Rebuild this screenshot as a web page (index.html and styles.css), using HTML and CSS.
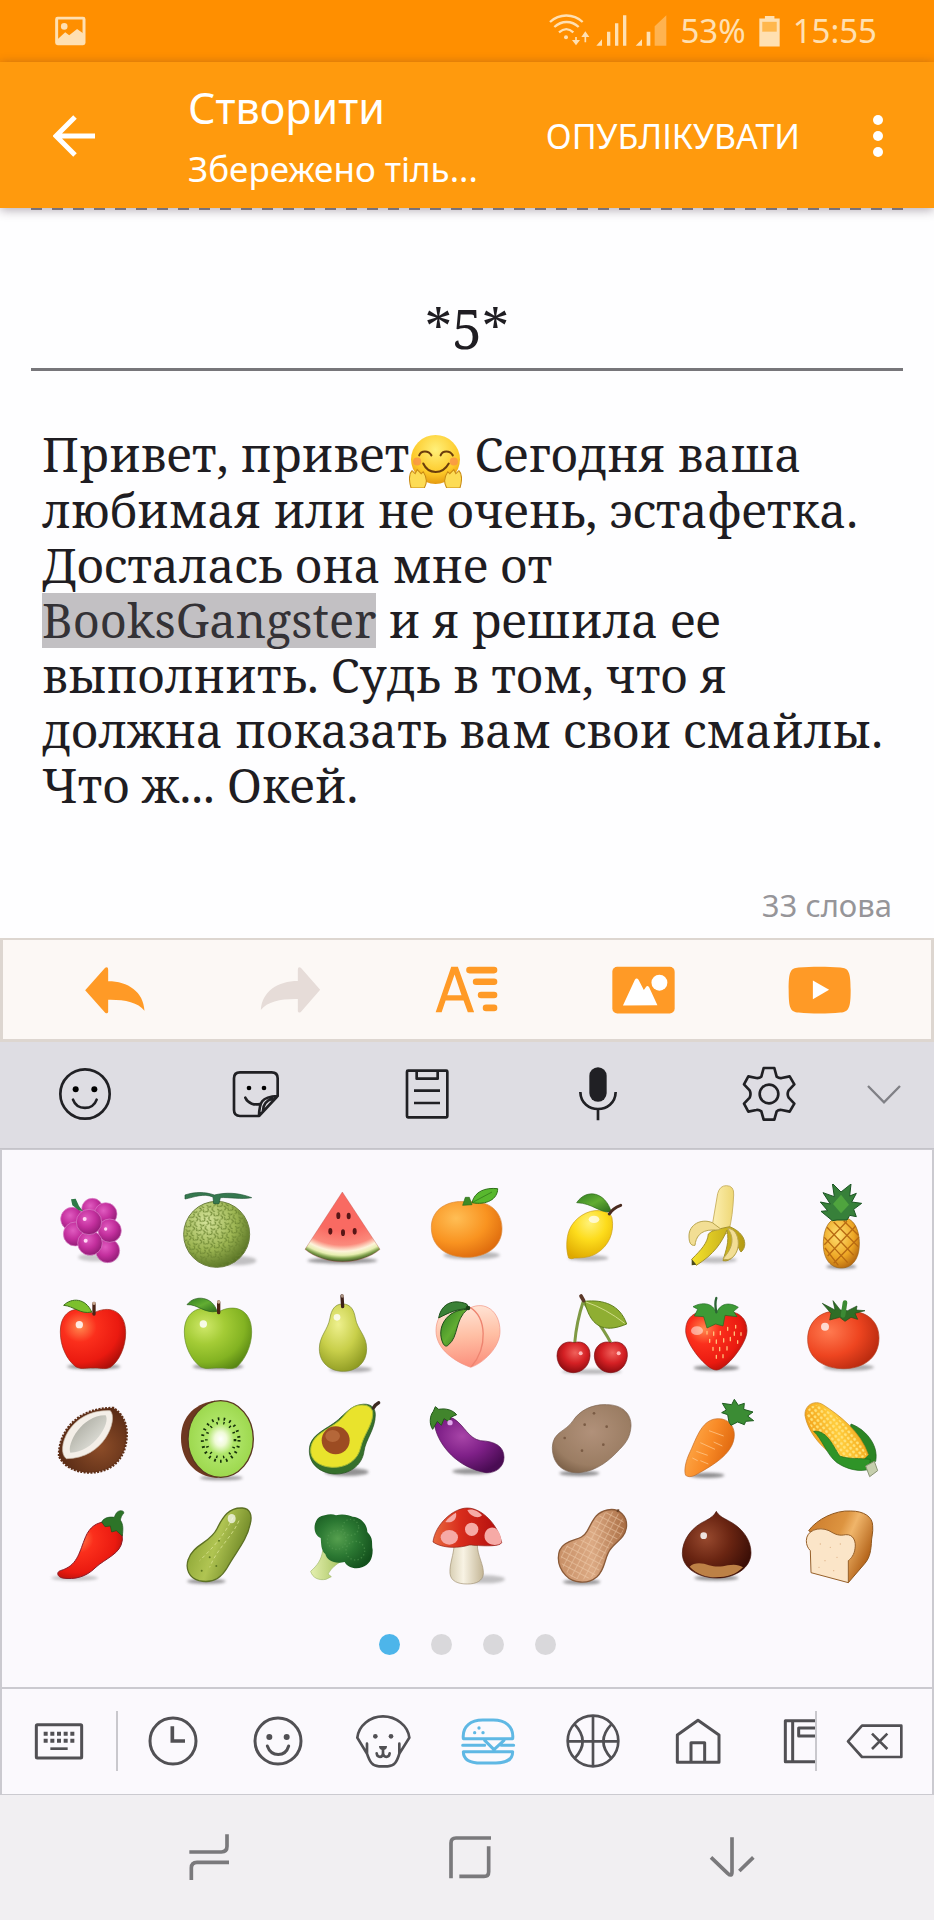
FILE: index.html
```html
<!DOCTYPE html>
<html lang="uk">
<head>
    <meta charset="UTF-8">
    <meta name="viewport" content="width=device-width, initial-scale=1.0">
    <title>Створити</title>
    <link rel="stylesheet" href="styles.css">
</head>
<body>
    <!-- shared gradients for the emoji drawings -->
    <svg class="defs" width="0" height="0" aria-hidden="true">
        <defs>
            <filter id="soft" x="-30%" y="-80%" width="160%" height="260%"><feGaussianBlur stdDeviation="5"/></filter>
            <radialGradient id="gGrape" cx=".4" cy=".35" r=".7"><stop offset="0" stop-color="#e05cc0"/><stop offset=".5" stop-color="#c4309e"/><stop offset="1" stop-color="#8d1a72"/></radialGradient>
            <radialGradient id="gMelon" cx=".35" cy=".3" r=".8"><stop offset="0" stop-color="#d5e39a"/><stop offset=".55" stop-color="#9cb552"/><stop offset="1" stop-color="#48631a"/></radialGradient>
            <pattern id="pMelon" width="34" height="30" patternUnits="userSpaceOnUse" patternTransform="rotate(20)"><path d="M2 4q8 6 12-2M20 3v8l9 3M6 12q7 2 4 9l-8 4M17 18l8 4-3 7M30 20l3 6" fill="none" stroke="#6a8430" stroke-width="3" stroke-linecap="round"/></pattern>
            <radialGradient id="gWater" gradientUnits="userSpaceOnUse" cx="937" cy="70" r="235"><stop offset=".6" stop-color="#f96a62"/><stop offset=".78" stop-color="#fb8a7c"/><stop offset=".86" stop-color="#fdf3da"/><stop offset=".91" stop-color="#e6eeb0"/><stop offset=".95" stop-color="#7fa04c"/><stop offset="1" stop-color="#33431d"/></radialGradient>
            <radialGradient id="gOrange" cx=".35" cy=".3" r=".8"><stop offset="0" stop-color="#ffbe55"/><stop offset=".55" stop-color="#f99320"/><stop offset="1" stop-color="#d9640a"/></radialGradient>
            <radialGradient id="gLemon" cx=".5" cy=".25" r=".8"><stop offset="0" stop-color="#fff27a"/><stop offset=".45" stop-color="#fddc1c"/><stop offset="1" stop-color="#dea800"/></radialGradient>
            <linearGradient id="gBanana"><stop offset="0" stop-color="#fdf0b4"/><stop offset="1" stop-color="#eed775"/></linearGradient>
            <linearGradient id="gPeel"><stop offset="0" stop-color="#f4e22d"/><stop offset="1" stop-color="#b49a14"/></linearGradient>
            <radialGradient id="gPine" cx=".4" cy=".35" r=".75"><stop offset="0" stop-color="#ffe070"/><stop offset=".6" stop-color="#eda624"/><stop offset="1" stop-color="#a85a0c"/></radialGradient>
            <radialGradient id="gRed" cx=".3" cy=".3" r=".85"><stop offset="0" stop-color="#ff8a50"/><stop offset=".3" stop-color="#fb2f1c"/><stop offset=".7" stop-color="#ea1a10"/><stop offset="1" stop-color="#9c0c06"/></radialGradient>
            <radialGradient id="gGreen" cx=".3" cy=".3" r=".85"><stop offset="0" stop-color="#cfe86a"/><stop offset=".35" stop-color="#a4cc36"/><stop offset=".7" stop-color="#83b322"/><stop offset="1" stop-color="#4e7c10"/></radialGradient>
            <radialGradient id="gPear" cx=".4" cy=".3" r=".8"><stop offset="0" stop-color="#eef08e"/><stop offset=".5" stop-color="#c8cf4a"/><stop offset="1" stop-color="#85921c"/></radialGradient>
            <linearGradient id="gLeaf" x1="0" y1="0" x2="1" y2="1"><stop offset="0" stop-color="#2f7d22"/><stop offset=".5" stop-color="#62ad32"/><stop offset="1" stop-color="#2b6a1c"/></linearGradient>
            <linearGradient id="gPeach" x1=".4" y1="0" x2=".5" y2="1"><stop offset="0" stop-color="#ffe6d8"/><stop offset=".5" stop-color="#ffbfa4"/><stop offset="1" stop-color="#fb8f7c"/></linearGradient>
            <radialGradient id="gCherry" cx=".55" cy=".35" r=".7"><stop offset="0" stop-color="#f0605a"/><stop offset=".5" stop-color="#d42024"/><stop offset="1" stop-color="#84090d"/></radialGradient>
            <radialGradient id="gTomato" cx=".3" cy=".35" r=".85"><stop offset="0" stop-color="#ff7a50"/><stop offset=".5" stop-color="#ee4520"/><stop offset="1" stop-color="#a8220a"/></radialGradient>
            <linearGradient id="gCoco" x1="0" y1="0" x2="1" y2="1"><stop offset="0" stop-color="#9d9d92"/><stop offset="1" stop-color="#f2f2ec"/></linearGradient>
            <radialGradient id="gShell" cx=".6" cy=".6" r=".6"><stop offset="0" stop-color="#8d4d28"/><stop offset="1" stop-color="#5a2c16"/></radialGradient>
            <radialGradient id="gKiwi"><stop offset="0" stop-color="#fff"/><stop offset=".18" stop-color="#f0fbd8"/><stop offset=".4" stop-color="#b0e66a"/><stop offset="1" stop-color="#9dd84e"/></radialGradient>
            <radialGradient id="gEgg" cx=".4" cy=".35" r=".7"><stop offset="0" stop-color="#a845a8"/><stop offset=".5" stop-color="#7f2088"/><stop offset="1" stop-color="#4a0c54"/></radialGradient>
            <radialGradient id="gPotato" cx=".5" cy=".4" r=".7"><stop offset="0" stop-color="#b1917a"/><stop offset=".7" stop-color="#9b7d63"/><stop offset="1" stop-color="#755a42"/></radialGradient>
            <linearGradient id="gCarrot" x1="0" y1=".3" x2="1" y2=".7"><stop offset="0" stop-color="#ffad4e"/><stop offset=".5" stop-color="#f88a26"/><stop offset="1" stop-color="#d9600a"/></linearGradient>
            <linearGradient id="gCorn" x1="0" y1=".6" x2="1" y2=".3"><stop offset="0" stop-color="#f09a14"/><stop offset=".5" stop-color="#ffcc3c"/><stop offset="1" stop-color="#f0a014"/></linearGradient>
            <pattern id="pCorn" width="13" height="14" patternUnits="userSpaceOnUse" patternTransform="rotate(-38)"><ellipse cx="6" cy="7" rx="4" ry="5" fill="#ffe27a"/></pattern>
            <linearGradient id="gPickle" x1="0" y1=".3" x2="1" y2=".7"><stop offset="0" stop-color="#86a030"/><stop offset=".45" stop-color="#b0c452"/><stop offset="1" stop-color="#5c761a"/></linearGradient>
            <radialGradient id="gBroc" cx=".4" cy=".45" r=".65"><stop offset="0" stop-color="#559f4e"/><stop offset=".5" stop-color="#2b7832"/><stop offset="1" stop-color="#13501c"/></radialGradient>
            <linearGradient id="gStalk"><stop offset="0" stop-color="#e4efb0"/><stop offset="1" stop-color="#a5c25c"/></linearGradient>
            <linearGradient id="gStem"><stop offset="0" stop-color="#d8cfb4"/><stop offset=".4" stop-color="#f8f3e4"/><stop offset="1" stop-color="#c4b696"/></linearGradient>
            <linearGradient id="gCap"><stop offset="0" stop-color="#e8693e"/><stop offset=".4" stop-color="#d82c1c"/><stop offset="1" stop-color="#b00c0c"/></linearGradient>
            <linearGradient id="gNut"><stop offset="0" stop-color="#c78f66"/><stop offset=".5" stop-color="#dcaa84"/><stop offset="1" stop-color="#a86c42"/></linearGradient>
            <pattern id="pNut" width="18" height="18" patternUnits="userSpaceOnUse" patternTransform="rotate(28)"><path d="M0 0H18M0 0V18" stroke="#f3d3b4" stroke-width="4"/></pattern>
            <radialGradient id="gChest" cx=".35" cy=".4" r=".7"><stop offset="0" stop-color="#97492e"/><stop offset=".5" stop-color="#6a2512"/><stop offset="1" stop-color="#3a0e06"/></radialGradient>
            <linearGradient id="gBread" x1="0" y1="0" x2="1" y2=".5"><stop offset="0" stop-color="#c9792a"/><stop offset=".5" stop-color="#dd9440"/><stop offset=".65" stop-color="#f0b56a"/><stop offset="1" stop-color="#b4641a"/></linearGradient>
            <radialGradient id="gFace" cx=".5" cy=".3" r=".7"><stop offset="0" stop-color="#fff07a"/><stop offset=".7" stop-color="#fdc928"/><stop offset="1" stop-color="#e59a10"/></radialGradient>
        </defs>
    </svg>

    <div class="screen">
        <div class="status-bar">
            <svg class="status-picture" viewBox="164 48 94 88" aria-hidden="true">
                <rect x="169" y="53" width="83" height="78" rx="3" fill="none" stroke="#ffe0b2" stroke-width="9"/>
                <circle cx="192" cy="78" r="10" fill="#ffe0b2"/>
                <path d="M171 118l24-22 12 9 24-19 20 14v32h-80z" fill="#ffe0b2"/>
            </svg>
            <div class="status-right">
                <svg class="status-signal" viewBox="240 40 354 108" aria-hidden="true">
                    <g fill="none" stroke="#ffe0b2" stroke-width="7">
                        <path d="M243 67c28-26 70-26 98 0M256 82c22-20 52-20 73 0M270 98c14-12 30-12 43 0"/>
                        <path d="M321 112v20M349 128v-26" stroke-width="5"/>
                    </g>
                    <g fill="#ffe0b2">
                        <circle cx="291" cy="113" r="6"/>
                        <path d="M309 121h24l-12 16zM337 112h24l-12-17z"/>
                        <path d="M382 138l17-19v19zM414 96h10v42h-10zM438 71h10v67h-10zM462 47h10v91h-10z"/>
                        <path d="M500 138l19-19v19zM533 96h11v42h-11z"/>
                        <path d="M557 138V80l35-33v91z" opacity=".45"/>
                    </g>
                </svg>
                <span>53%</span>
                <svg class="status-battery" viewBox="874 46 64 96" aria-hidden="true">
                    <path d="M892 48h29v8h16v85h-62V56h17z" fill="#ffe0b2"/>
                    <path d="M884 66h44v30h-44z" fill="#ffb74d"/>
                </svg>
                <span>15:55</span>
            </div>
        </div>

        <header class="app-bar">
            <button class="icon-button back" aria-label="Назад">
                <svg viewBox="0 0 44 44"><path d="M42 22H4M22 3L3 22l19 19" fill="none" stroke="#fff" stroke-width="5"/></svg>
            </button>
            <div class="app-title">
                <h1>Створити</h1>
                <p>Збережено тіль...</p>
            </div>
            <button class="publish">ОПУБЛІКУВАТИ</button>
            <button class="icon-button more" aria-label="Меню">
                <svg viewBox="0 0 12 44"><g fill="#fff"><circle cx="6" cy="6" r="5"/><circle cx="6" cy="22" r="5"/><circle cx="6" cy="38" r="5"/></g></svg>
            </button>
        </header>

        <main class="editor">
            <div class="cover-edge"></div>
            <input class="chapter-title" type="text" value="*5*" aria-label="Назва розділу">
            <div class="story" contenteditable="true" spellcheck="false" role="textbox" aria-label="Текст">
                Привет, привет<svg class="hug" viewBox="0 0 52 52" aria-hidden="true">
                    <circle cx="26" cy="24" r="24" fill="url(#gFace)"/>
                    <g fill="none" stroke="#6b3d0c" stroke-width="2" stroke-linecap="round"><path d="M10 20c2-5 9-5 12 0M31 20c2-5 9-5 12 0M14 28c5 11 19 11 25 0"/></g>
                    <circle cx="8" cy="26" r="4" fill="#f88a4a" opacity=".7"/><circle cx="44" cy="26" r="4" fill="#f88a4a" opacity=".7"/>
                    <path d="M2 52C0 45 0 38 3 35l3 3 2-4 4 4 2-2c4 6 4 11 1 16zM50 52c2-7 2-14-1-17l-3 3-2-4-4 4-2-2c-4 6-4 11-1 16z" fill="#fddc55" stroke="#c98a14" stroke-width="1"/>
                </svg> Сегодня ваша<br>
                любимая или не очень, эстафетка.<br>
                Досталась она мне от<br>
                <span class="selected">BooksGangster</span> и я решила ее<br>
                выполнить. Судь в том, что я<br>
                должна показать вам свои смайлы.<br>
                Что ж... Окей.
            </div>
            <p class="word-count">33 слова</p>
        </main>

        <div class="format-bar">
            <button class="icon-button" aria-label="Скасувати">
                <svg viewBox="252 115 180 180"><path d="M254 206l60-68q9-4 9 6v35c60 0 106 32 109 88-20-26-62-34-109-33v37q-2 6-9 2z" fill="#ff9a26"/></svg>
            </button>
            <button class="icon-button" aria-label="Повторити" disabled>
                <svg viewBox="782 115 180 180"><path d="M961 204l-58-66q-9-4-9 6v34c-60 0-108 32-111 87 20-26 62-34 111-33v37q2 6 9 2z" fill="#e6dcd8"/></svg>
            </button>
            <button class="icon-button" aria-label="Формат тексту">
                <svg viewBox="-94 235 190 180">
                    <path d="M-92 392l47-137h20l49 137H5l-13-35h-54l-12 35zM-57 341h43l-21-63z" fill="#ff9a26" fill-rule="evenodd"/>
                    <g stroke="#ff9a26" stroke-width="20" stroke-linecap="round"><path d="M10 265h74M30 300h54M45 340h39M60 379h24"/></g>
                </svg>
            </button>
            <button class="icon-button" aria-label="Зображення">
                <svg viewBox="435 235 190 180">
                    <rect x="436" y="255" width="188" height="141" rx="15" fill="#ff9a26"/>
                    <path d="M468 372l36-78q5-8 11 0l16 31 7-10q4-5 9 2l25 54z" fill="#fff" />
                    <circle cx="578" cy="303" r="24" fill="#fff"/>
                </svg>
            </button>
            <button class="icon-button" aria-label="Відео">
                <svg viewBox="964 235 190 180">
                    <path d="M966 325c0-55 5-66 30-68 40-3 86-3 126 0 25 2 31 13 31 68s-6 66-31 68c-40 4-86 4-126 0-25-2-30-13-30-68z" fill="#ff9a26"/>
                    <path d="M1039 296l49 28-49 29z" fill="#fff"/>
                </svg>
            </button>
        </div>

        <section class="keyboard" aria-label="Клавіатура">
            <div class="keyboard-tools">
                <button class="icon-button" aria-label="Емодзі">
                    <svg viewBox="167 430 180 180"><g fill="none" stroke="#202024" stroke-width="8" stroke-linecap="round"><circle cx="257" cy="520" r="74"/><path d="M221 537c12 33 60 33 71 0"/></g><circle cx="229" cy="506" r="9"/><circle cx="285" cy="506" r="9"/></svg>
                </button>
                <button class="icon-button" aria-label="Наліпки">
                    <svg viewBox="681 430 180 180"><g fill="none" stroke="#202024" stroke-width="8" stroke-linecap="round" stroke-linejoin="round"><path d="M780 586h-57q-18 0-18-18v-95q0-18 18-18h95q18 0 18 18v53zM780 586c1-40 6-58 56-60M739 531c8 18 28 24 46 18M792 570c0-16 8-30 28-36"/></g><circle cx="750" cy="502" r="7"/><circle cx="795" cy="502" r="7"/></svg>
                </button>
                <button class="icon-button" aria-label="Буфер обміну">
                    <svg viewBox="1194 430 180 180"><g fill="none" stroke="#202024" stroke-width="8" stroke-linejoin="round"><rect x="1224" y="450" width="121" height="140" rx="3"/><path d="M1253 452v22h63v-22M1245 510h78M1245 547h78"/></g></svg>
                </button>
                <button class="icon-button" aria-label="Голосовий ввід">
                    <svg viewBox="307 550 180 180"><rect x="371" y="560" width="52" height="103" rx="26" fill="#202024"/><path d="M344 634c2 68 104 68 106 0M397 685v34" fill="none" stroke="#202024" stroke-width="8"/></svg>
                </button>
                <button class="icon-button" aria-label="Налаштування">
                    <svg viewBox="821 550 180 180"><g fill="none" stroke="#202024" stroke-width="8" stroke-linejoin="round"><path d="M895 562h32l7 26q8 6 15 4l24-5 14 24-17 18q-6 11 0 22l17 18-14 24-24-5q-10-1-15 4l-7 25h-32l-7-25q-8-6-15-4l-24 5-13-24 17-18q5-11 0-22l-17-18 13-24 24 5q9 1 15-4z"/><circle cx="911" cy="640" r="28"/></g></svg>
                </button>
                <button class="icon-button collapse" aria-label="Згорнути">
                    <svg viewBox="1163 550 180 180"><path d="M1205 616l48 49 48-49" fill="none" stroke="#808086" stroke-width="7"/></svg>
                </button>
            </div>

            <div class="emoji-panel">
                <div class="emoji-grid">
                    <button aria-label="Виноград"><svg viewBox="52 70 270 270">
                        <ellipse cx="205" cy="290" rx="60" ry="12" fill="#999" opacity=".5" filter="url(#soft)"/>
                        <g fill="url(#gGrape)" stroke="#dc86cb" stroke-width="2"><circle cx="188" cy="145" r="32"/><circle cx="228" cy="160" r="34"/><circle cx="128" cy="175" r="35"/><circle cx="137" cy="220" r="36"/><circle cx="234" cy="270" r="36"/><circle cx="240" cy="210" r="35"/><circle cx="181" cy="247" r="37"/><circle cx="178" cy="184" r="38"/></g>
                        <path d="M124 116l14-2 10 22 12 16-14-4-18-14z" fill="#2f7a48"/>
                        <g fill="#ffd8f4"><circle cx="165" cy="175" r="6"/><circle cx="168" cy="240" r="6"/><circle cx="228" cy="205" r="5"/></g>
                    </svg></button>
                    <button aria-label="Диня"><svg viewBox="427 70 270 270">
                        <ellipse cx="620" cy="300" rx="60" ry="14" fill="#888" opacity=".5" filter="url(#soft)"/>
                        <circle cx="561" cy="221" r="99" fill="url(#gMelon)" stroke="#6c7f40" stroke-width="3"/>
                        <circle cx="561" cy="221" r="97" fill="url(#pMelon)"/>
                        <path d="M466 103c30-10 60-10 88 0 34-8 70-8 112 8-30 6-70-2-94 0l-4 18h-16l-2-20c-30-12-54 0-84 6z" fill="#35784f" stroke="#1f5434" stroke-width="2"/>
                    </svg></button>
                    <button aria-label="Кавун"><svg viewBox="801 70 270 270">
                        <ellipse cx="937" cy="300" rx="105" ry="9" fill="#555" opacity=".6" filter="url(#soft)"/>
                        <path d="M937 94l113 172c-60 50-165 50-225 0z" fill="url(#gWater)" stroke="#b04a44" stroke-width="1"/>
                        <g fill="#571616"><ellipse cx="925" cy="165" rx="6" ry="10"/><ellipse cx="956" cy="166" rx="6" ry="10"/><ellipse cx="901" cy="212" rx="6" ry="10"/><ellipse cx="939" cy="216" rx="6" ry="10"/><ellipse cx="974" cy="212" rx="6" ry="10"/></g>
                    </svg></button>
                    <button aria-label="Мандарин"><svg viewBox="36 70 270 270">
                        <ellipse cx="185" cy="284" rx="85" ry="12" fill="#777" opacity=".5" filter="url(#soft)"/>
                        <path d="M170 124c70-8 106 30 106 80 0 56-50 86-106 86S64 262 64 200c0-54 50-84 106-76z" fill="url(#gOrange)" stroke="#d98a3c" stroke-width="2"/>
                        <path d="M186 126c8-34 40-46 77-42 0 32-34 50-77 42z" fill="#58b82e" stroke="#2c7016" stroke-width="3"/>
                        <path d="M190 124l56-30M158 134l8-24h12l8 22z" fill="#3f8a26" stroke="#2c7016" stroke-width="2"/>
                    </svg></button>
                    <button aria-label="Лимон"><svg viewBox="411 70 270 270">
                        <ellipse cx="535" cy="292" rx="60" ry="9" fill="#777" opacity=".5" filter="url(#soft)"/>
                        <path d="M476 292c-8-22-8-60 2-84 14-36 56-62 90-58 22 2 36 10 38 22 8 44-10 84-46 106-20 12-42 14-66 14q-10 4-18 0z" fill="url(#gLemon)" stroke="#c89c14" stroke-width="2"/>
                        <path d="M500 126c30-44 86-32 104 28-40 2-54-26-104-28z" fill="url(#gLeaf)" stroke="#2f6a1c" stroke-width="2"/>
                        <path d="M598 160c8-14 18-20 34-26" fill="none" stroke="#4a2c20" stroke-width="9" stroke-linecap="round"/>
                        <ellipse cx="552" cy="176" rx="16" ry="11" fill="#fff" opacity=".7"/>
                    </svg></button>
                    <button aria-label="Банан"><svg viewBox="785 70 270 270">
                        <ellipse cx="915" cy="298" rx="65" ry="10" fill="#888" opacity=".5" filter="url(#soft)"/>
                        <path d="M904 205l18-106q6-24 26-24 24 0 22 28c-2 40-6 80-16 112-20 14-40 10-50-10z" fill="url(#gBanana)" stroke="#cdb668" stroke-width="3"/>
                        <path d="M904 212l26-8 28-6c50 20 54 60 34 76-6-8-8-16-10-20 0 20-20 52-44 46 8-30 20-56 12-92-16 38-38 72-92 106l-14-18c30-30 48-50 50-76z" fill="url(#gPeel)" stroke="#a4922e" stroke-width="3"/>
                        <path d="M906 186c-34-14-70 6-70 40 0 18 4 30 18 28 2-24 16-46 52-46 14 0 24 0 24-4zM952 204c20 24 18 56-14 90 24 12 46-16 46-46 0-24-12-46-32-44z" fill="#f2de94" stroke="#b9a54e" stroke-width="3"/>
                        <path d="M844 296l14 16-14 2z" fill="#4a4a1a"/>
                    </svg></button>
                    <button aria-label="Ананас"><svg viewBox="1160 70 270 270">
                        <ellipse cx="1293" cy="318" rx="45" ry="7" fill="#555" opacity=".6" filter="url(#soft)"/>
                        <path d="M1293 170c38 0 54 36 54 80 0 48-24 72-54 72s-54-24-54-72c0-44 16-80 54-80z" fill="url(#gPine)" stroke="#9a6414" stroke-width="2"/>
                        <path d="M1250 200l80 84M1242 230l70 76M1270 184l74 74M1336 196l-84 90M1346 230l-76 78M1310 182l-68 70M1244 262l40 52M1300 180l44 44" stroke="#b86a12" stroke-width="4" fill="none"/>
                        <path d="M1266 180l-34-28 20-2-22-26 30 6-22-34 34 12-6-40 26 26 30-24-4 36 20-8-14 26 30 4-24 18 8 22-20-4-8 14h-30z" fill="#37803a" stroke="#1c5524" stroke-width="3"/>
                        <path d="M1268 130l24-28 24 30-24 26z" fill="#4fa43e"/>
                    </svg></button>

                    <button aria-label="Червоне яблуко"><svg viewBox="52 385 270 270">
                        <ellipse cx="192" cy="618" rx="80" ry="9" fill="#555" opacity=".6" filter="url(#soft)"/>
                        <path d="M190 458c46-26 98-10 98 58 0 44-20 86-46 104-18 8-34 0-52 2-18-2-34 6-52-4-26-20-46-60-46-104 0-68 52-82 98-56z" fill="url(#gRed)" stroke="#9a2414" stroke-width="2"/>
                        <path d="M102 434c24-24 66-22 84 20-34 8-54-18-84-20z" fill="#7cc02c" stroke="#3c6e18" stroke-width="3"/>
                        <path d="M193 460v-32" stroke="#4d2416" stroke-width="10" stroke-linecap="round"/><circle cx="193" cy="428" r="5" fill="#c8a890"/>
                        <circle cx="149" cy="492" r="11" fill="#fff" opacity=".85"/>
                    </svg></button>
                    <button aria-label="Зелене яблуко"><svg viewBox="427 385 270 270">
                        <ellipse cx="565" cy="618" rx="76" ry="9" fill="#555" opacity=".6" filter="url(#soft)"/>
                        <path d="M566 454c46-26 100-10 100 60 0 44-22 86-46 106-18 8-34 0-54 2-18-2-36 6-54-4-26-20-48-60-48-104 0-68 56-86 102-60z" fill="url(#gGreen)" stroke="#648c26" stroke-width="2"/>
                        <path d="M472 432c24-32 78-24 90 20-36 8-58-22-90-20z" fill="url(#gLeaf)" stroke="#24591a" stroke-width="2"/>
                        <path d="M567 456v-32" stroke="#4d2416" stroke-width="10" stroke-linecap="round"/><circle cx="567" cy="424" r="5" fill="#c8a890"/>
                        <circle cx="521" cy="490" r="11" fill="#fff" opacity=".85"/>
                    </svg></button>
                    <button aria-label="Груша"><svg viewBox="801 385 270 270">
                        <ellipse cx="962" cy="626" rx="64" ry="9" fill="#666" opacity=".5" filter="url(#soft)"/>
                        <path d="M938 430c24 0 34 18 38 42 6 36 34 52 34 92 0 44-32 68-70 68s-72-24-72-68c0-38 26-56 32-92 4-24 14-42 38-42z" fill="url(#gPear)" stroke="#7c8930" stroke-width="2"/>
                        <path d="M938 438l-2-32" stroke="#3d2018" stroke-width="10" stroke-linecap="round"/><circle cx="937" cy="406" r="5" fill="#a89080"/>
                        <circle cx="921" cy="470" r="10" fill="#fff" opacity=".8"/>
                    </svg></button>
                    <button aria-label="Персик"><svg viewBox="36 385 270 270">
                        <path d="M180 442c44-22 90 8 90 70 0 48-50 96-88 108-44-16-104-52-104-110 0-62 58-90 102-68z" fill="url(#gPeach)" stroke="#f29484" stroke-width="2"/>
                        <path d="M180 440c50 30 54 120 4 178" fill="none" stroke="#ee8470" stroke-width="4"/>
                        <path d="M86 472c8-44 44-58 84-42l8 14c-36 0-62 12-92 28z" fill="#3a8136" stroke="#1e4f1a" stroke-width="3"/>
                        <path d="M172 446c-62 0-96 56-72 104 6 8 10 8 16 2 30-24 18-74 56-106z" fill="url(#gLeaf)" stroke="#1e4f1a" stroke-width="3"/>
                        <circle cx="174" cy="442" r="7" fill="#1d4018"/>
                    </svg></button>
                    <button aria-label="Вишні"><svg viewBox="411 385 270 270">
                        <ellipse cx="545" cy="633" rx="90" ry="7" fill="#777" opacity=".5" filter="url(#soft)"/>
                        <path d="M494 548c4-46 14-90 26-126 22 34 60 80 82 124" fill="none" stroke="#7f9a44" stroke-width="9"/>
                        <path d="M524 422c56-6 106 10 126 68-52 22-106 24-126-68z" fill="#8fae32" stroke="#5f7e1c" stroke-width="3"/>
                        <path d="M528 424q60 20 116 64" fill="none" stroke="#d0dc88" stroke-width="3"/>
                        <path d="M513 406l8 14" stroke="#5b3828" stroke-width="11" stroke-linecap="round"/>
                        <g fill="url(#gCherry)" stroke="#7c0c10" stroke-width="2"><path d="M492 546c26-8 50 8 48 40-2 30-24 50-50 50s-48-20-49-50c0-32 26-48 51-40z"/><path d="M604 546c26-8 50 8 48 40-2 30-24 50-50 50s-48-20-49-50c0-32 26-48 51-40z"/></g>
                        <circle cx="512" cy="578" r="6" fill="#fbb"/><circle cx="626" cy="578" r="6" fill="#fbb"/>
                    </svg></button>
                    <button aria-label="Полуниця"><svg viewBox="785 385 270 270">
                        <ellipse cx="918" cy="622" rx="68" ry="8" fill="#444" opacity=".6" filter="url(#soft)"/>
                        <path d="M918 460c40-18 92-4 92 50 0 40-64 118-92 118s-92-76-92-118c0-54 50-68 92-50z" fill="url(#gRed)" stroke="#9c2018" stroke-width="2"/>
                        <path d="M890 512v8M910 514v10M930 512v10M952 500v9M976 494v8M972 514v10M992 516v8M898 536v9M918 538v10M940 534v10M960 530v10M982 540v8M908 560v9M928 560v10M950 558v10M918 584v9M938 582v9" stroke="#ffc07a" stroke-width="4" stroke-linecap="round"/>
                        <path d="M918 458c-10-34-44-34-70-20l14 8-10 20 28 2 10 34 26-12 22 6 6-32 36 4-10-16 14-12c-26-16-54-14-66 18z" fill="#3d9a36" stroke="#216a22" stroke-width="2"/>
                        <path d="M918 454c-4-18-4-30 0-42" fill="none" stroke="#2c6434" stroke-width="7" stroke-linecap="round"/>
                        <ellipse cx="860" cy="510" rx="18" ry="13" fill="#fff" opacity=".5"/>
                    </svg></button>
                    <button aria-label="Помідор"><svg viewBox="1160 385 270 270">
                        <ellipse cx="1315" cy="620" rx="76" ry="10" fill="#777" opacity=".6" filter="url(#soft)"/>
                        <path d="M1298 456c58-14 108 18 108 76 0 62-50 92-106 92s-108-28-108-88c0-62 54-96 106-80z" fill="url(#gTomato)" stroke="#b43c1c" stroke-width="2"/>
                        <path d="M1290 448l-22-28 6 28-38-20 26 30-4 20 30-8 16 12 18-12 20 6-8-18 30-8-26-2 2-12-28 14z" fill="#2f6e26" stroke="#1d4a18" stroke-width="2"/>
                        <path d="M1298 464l6-38" stroke="#3c8a34" stroke-width="14" stroke-linecap="round"/>
                        <circle cx="1244" cy="498" r="12" fill="#fff" opacity=".75"/>
                    </svg></button>

                    <button aria-label="Кокос"><svg viewBox="52 40 270 270">
                        <path d="M88 226c-2-72 54-146 164-144 40 26 46 74 34 118-14 52-56 76-108 76-42-2-76-18-90-50z" fill="url(#gShell)"/>
                        <path d="M88 226c-2-72 54-146 164-144 40 26 46 74 34 118-14 52-56 76-108 76-42-2-76-18-90-50z" fill="none" stroke="#5f3018" stroke-width="7" stroke-dasharray="6 4"/>
                        <path d="M242 90c24 26-18 144-132 144-34-24 8-150 132-144z" fill="#f4efe8" stroke="#cbbcae" stroke-width="2"/>
                        <path d="M228 104c16 22-36 112-106 112-12-26 36-114 106-112z" fill="url(#gCoco)"/>
                    </svg></button>
                    <button aria-label="Ківі"><svg viewBox="427 40 270 270">
                        <ellipse cx="575" cy="292" rx="64" ry="7" fill="#666" opacity=".6" filter="url(#soft)"/>
                        <path d="M556 60c-70 10-102 56-102 112 0 64 40 116 110 120z" fill="#6e3820"/>
                        <ellipse cx="573" cy="175" rx="98" ry="115" fill="url(#gKiwi)" stroke="#5a3820" stroke-width="4"/>
                        <ellipse cx="573" cy="178" rx="55" ry="64" fill="none" stroke="#16300a" stroke-width="9" stroke-dasharray="5 13"/>
                        <ellipse cx="573" cy="178" rx="43" ry="52" fill="none" stroke="#16300a" stroke-width="8" stroke-dasharray="4 17"/>
                    </svg></button>
                    <button aria-label="Авокадо"><svg viewBox="801 40 270 270">
                        <ellipse cx="950" cy="274" rx="66" ry="12" fill="#666" opacity=".7" filter="url(#soft)"/>
                        <path d="M990 72c28-6 46 6 46 30 0 44-30 76-34 110-6 44-46 70-90 68-44-4-74-30-74-70 0-54 60-64 94-100 20-18 34-34 58-38z" fill="#36702c" stroke="#234f1c" stroke-width="2"/>
                        <path d="M986 74c26-4 44 6 42 28-2 34-28 62-36 98-8 38-42 62-86 60-40-2-66-24-64-54 4-50 60-58 94-94 16-18 28-34 50-38z" fill="#e9e32c" stroke="#a8bc34" stroke-width="3"/>
                        <ellipse cx="917" cy="179" rx="42" ry="42" fill="#9c4c22"/><ellipse cx="908" cy="166" rx="22" ry="18" fill="#c67a4a" opacity=".6"/>
                        <path d="M1030 82c4-8 8-12 16-16" fill="none" stroke="#3c2a20" stroke-width="10" stroke-linecap="round"/>
                    </svg></button>
                    <button aria-label="Баклажан"><svg viewBox="36 40 270 270">
                        <ellipse cx="185" cy="272" rx="58" ry="9" fill="#555" opacity=".6" filter="url(#soft)"/>
                        <path d="M74 136c-6-20 30-40 60-20 30 20 42 58 78 64 42 2 70 16 70 50 0 30-26 48-54 46-84-14-142-80-154-140z" fill="url(#gEgg)" stroke="#4b1050" stroke-width="2"/>
                        <path d="M70 92l6-14 10 8c22-4 42 2 54 16l-18 8-4 14-16-10-8 20-12-12-14 24c-10-14-10-40 2-54z" fill="#41852c" stroke="#24581a" stroke-width="3"/>
                        <circle cx="120" cy="126" r="8" fill="#e0a8ec"/>
                    </svg></button>
                    <button aria-label="Картопля"><svg viewBox="411 40 270 270">
                        <ellipse cx="508" cy="278" rx="60" ry="8" fill="#444" opacity=".6" filter="url(#soft)"/>
                        <path d="M590 72c46 0 74 26 73 64-2 30-12 48-34 70-26 28-66 66-122 70-50 2-80-28-80-76 2-48 40-46 62-80 20-30 56-50 101-48z" fill="url(#gPotato)" stroke="#7c6450" stroke-width="2"/>
                        <g fill="#7a5b44"><circle cx="524" cy="132" r="4"/><circle cx="552" cy="98" r="4"/><circle cx="590" cy="138" r="4"/><circle cx="580" cy="192" r="4"/><circle cx="516" cy="210" r="4"/><circle cx="464" cy="172" r="4"/></g>
                    </svg></button>
                    <button aria-label="Морква"><svg viewBox="785 40 270 270">
                        <ellipse cx="890" cy="284" rx="52" ry="8" fill="#444" opacity=".6" filter="url(#soft)"/>
                        <path d="M826 284c-6-14 0-44 14-72 20-44 36-98 84-98 32 0 48 24 48 48 0 60-74 96-118 122q-18 8-28 0z" fill="url(#gCarrot)" stroke="#c26a22" stroke-width="2"/>
                        <path d="M896 150l44 16M910 184l26 12M870 186l44 20M858 212l34 12M870 240l24 10M846 232l16 8" stroke="#ffd09a" stroke-width="2"/>
                        <path d="M956 124l-4-22-18-6 14-8-12-20 28 4 8-16 12 18 18-6-2 18 28 8-16 12 18 14-24 2-4 10-20-8-20 10z" fill="#3b8c34" stroke="#1f5c20" stroke-width="3"/>
                    </svg></button>
                    <button aria-label="Кукурудза"><svg viewBox="1160 40 270 270">
                        <path d="M1322 130c40 14 84 60 74 112l-30 20-60-60z" fill="#2c8524" stroke="#1c5c18" stroke-width="2"/>
                        <path d="M1184 104c-2-30 28-48 54-32 50 32 112 80 136 150l-20 20-60-2c-54-30-100-80-110-136z" fill="url(#gCorn)" stroke="#c58a1c" stroke-width="2"/>
                        <path d="M1190 104c0-26 24-38 46-24 50 32 110 80 132 144l-20 12-50 0c-50-30-98-80-108-132z" fill="url(#pCorn)"/>
                        <path d="M1210 152c38-4 54 36 78 74 28 10 60 6 92 10l-4 30c-24 8-64 2-96-20-30-22-44-70-70-94z" fill="#2f9428" stroke="#1c6618" stroke-width="2"/>
                        <path d="M1366 256l26-14 10 28-24 18z" fill="#c6cfae" stroke="#8a9474" stroke-width="3"/>
                    </svg></button>

                    <button aria-label="Перець чилі"><svg viewBox="52 355 270 270">
                        <ellipse cx="135" cy="592" rx="70" ry="8" fill="#777" opacity=".4" filter="url(#soft)"/>
                        <path d="M222 424c34-4 58 20 56 54-4 42-50 54-82 84-26 26-60 36-98 30-16-4-18-18-6-22 50-14 56-52 72-92 10-28 26-50 58-54z" fill="url(#gRed)" stroke="#8c1c28" stroke-width="3"/>
                        <path d="M216 424c8-14 24-16 38-14 4-12 8-18 18-20q12 0 10 8c-6 6-8 12-10 20 10 14 8 30 6 48l-18-16-14 4-4-18-16 2z" fill="#2d7428" stroke="#1b501c" stroke-width="2"/>
                    </svg></button>
                    <button aria-label="Огірок"><svg viewBox="427 355 270 270">
                        <ellipse cx="530" cy="602" rx="58" ry="8" fill="#555" opacity=".6" filter="url(#soft)"/>
                        <path d="M638 382c24 2 30 22 24 46-10 52-44 86-70 134-20 34-50 46-84 38-30-8-42-36-32-64 14-44 66-50 86-92 18-36 36-64 76-62z" fill="url(#gPickle)" stroke="#5c7024" stroke-width="4"/>
                        <path d="M628 420c-22 50-66 84-88 140M610 410c-30 60-60 90-100 130" fill="none" stroke="#dbe494" stroke-width="3" stroke-dasharray="10 8" opacity=".8"/>
                        <ellipse cx="606" cy="414" rx="12" ry="14" fill="#fff" opacity=".7"/>
                        <g fill="#5f7a22"><circle cx="516" cy="570" r="3"/><circle cx="540" cy="530" r="3"/><circle cx="568" cy="480" r="3"/><circle cx="560" cy="556" r="3"/></g>
                    </svg></button>
                    <button aria-label="Броколі"><svg viewBox="801 355 270 270">
                        <path d="M878 510c-4 28-16 44-36 62 6 20 24 28 46 24l16-8-10-8c10-18 24-30 44-40z" fill="url(#gStalk)" stroke="#9fb868" stroke-width="2"/>
                        <path d="M884 404c14-4 24-4 34 0 20-6 40 0 50 4 28 2 44 26 44 46 20 20 12 34 16 54 0 30-12 44-32 52-22 8-46-2-52-16-30 8-54-6-58-24-14-12-12-32-14-48-20-8-22-36-14-50 4-10 12-16 26-18z" fill="url(#gBroc)"/>
                        <g fill="none" stroke="#5ca058" stroke-width="4" stroke-dasharray="4 7" opacity=".5"><circle cx="920" cy="478" r="28"/><circle cx="962" cy="440" r="24"/><circle cx="976" cy="510" r="28"/></g>
                    </svg></button>
                    <button aria-label="Гриб"><svg viewBox="36 355 270 270">
                        <ellipse cx="225" cy="596" rx="60" ry="12" fill="#888" opacity=".5" filter="url(#soft)"/>
                        <path d="M132 492h70c0 34 20 60 18 88-2 20-20 30-48 30s-50-8-52-32c-2-30 12-56 12-86z" fill="url(#gStem)" stroke="#a09070" stroke-width="2"/>
                        <path d="M172 382c44 0 92 50 103 104-6 12-46 10-84 8-10-2-12-2-24 2-36 8-76 4-98-12 6-52 60-102 103-102z" fill="url(#gCap)" stroke="#8c1c14" stroke-width="2"/>
                        <g fill="#f6aaa6"><path d="M172 388c14-6 36 4 44 16-10 12-36 4-44-16z"/><ellipse cx="118" cy="470" rx="26" ry="22"/><circle cx="185" cy="446" r="20"/><path d="M262 448c10 12 12 24 12 38-14 12-44 8-50-14-4-30 26-40 38-24z"/><path d="M138 396c4 20-10 32-32 28 8-12 18-20 32-28z"/></g>
                    </svg></button>
                    <button aria-label="Арахіс"><svg viewBox="411 355 270 270">
                        <ellipse cx="515" cy="604" rx="56" ry="8" fill="#555" opacity=".6" filter="url(#soft)"/>
                        <path d="M592 388c36-8 62 20 57 54-6 36-40 44-54 74-14 28-10 50-34 72-28 24-72 20-94-4-30-32-28-76-2-94 24-18 50-10 66-38 16-26 22-56 61-64z" fill="url(#gNut)" stroke="#8a5a38" stroke-width="4"/>
                        <path d="M592 394c32-8 54 18 50 48-6 32-40 44-54 74-14 28-10 46-32 66-26 22-64 18-84-4-26-28-26-66-2-82 24-16 50-10 66-38 16-26 22-56 56-64z" fill="url(#pNut)" opacity=".65"/>
                        <path d="M622 394l4-8" stroke="#6b4428" stroke-width="6"/>
                    </svg></button>
                    <button aria-label="Каштан"><svg viewBox="785 355 270 270">
                        <ellipse cx="918" cy="592" rx="66" ry="8" fill="#555" opacity=".6" filter="url(#soft)"/>
                        <path d="M918 392c6 12 20 20 36 28 40 20 68 56 68 96 0 46-48 76-102 76s-104-28-104-74c0-42 30-80 70-98 16-8 26-16 32-28z" fill="url(#gChest)" stroke="#471408" stroke-width="2"/>
                        <path d="M838 558c14-14 38-12 58-4 20 6 40 4 56 0 20-4 34-2 46 6-22 22-48 30-80 30s-60-10-80-32z" fill="#bd8146"/>
                        <circle cx="880" cy="465" r="10" fill="#fff" opacity=".85"/>
                    </svg></button>
                    <button aria-label="Хліб"><svg viewBox="1160 355 270 270">
                        <path d="M1195 450c24-34 80-62 126-59 40 0 66 18 66 44 2 22-4 34-4 54-2 30-8 46-20 60l-50 58-28-100z" fill="url(#gBread)" stroke="#8f571e" stroke-width="3"/>
                        <path d="M1188 480c0-30 36-44 68-30 20 12 30 16 50 12 24-2 32 22 28 42-2 18-12 30-20 36v66l-112-30-2-66c-8-8-12-18-12-30z" fill="#fbe5c8" stroke="#96602a" stroke-width="3"/>
                        <g fill="#e0b48a"><circle cx="1230" cy="490" r="2"/><circle cx="1260" cy="500" r="2"/><circle cx="1244" cy="540" r="2"/><circle cx="1280" cy="530" r="2"/><circle cx="1226" cy="560" r="2"/><circle cx="1290" cy="490" r="2"/><circle cx="1270" cy="570" r="2"/></g>
                    </svg></button>
                </div>
                <div class="pager">
                    <span class="dot active"></span>
                    <span class="dot"></span>
                    <span class="dot"></span>
                    <span class="dot"></span>
                </div>
            </div>

            <div class="category-bar">
                <button class="icon-button to-keyboard" aria-label="Літери">
                    <svg viewBox="85 332 180 180"><rect x="107" y="373" width="136" height="100" rx="3" fill="none" stroke="#515054" stroke-width="9"/><path d="M129 400h93M129 421h93" stroke="#515054" stroke-width="12" stroke-dasharray="12 8"/><path d="M149 445h52" stroke="#515054" stroke-width="8"/></svg>
                </button>
                <div class="categories">
                    <button class="icon-button" aria-label="Недавні">
                        <svg viewBox="424 332 180 180"><g fill="none" stroke="#515054" stroke-width="9"><circle cx="514" cy="422" r="69"/><path d="M512 378v44h38" stroke-width="11"/></g></svg>
                    </button>
                    <button class="icon-button" aria-label="Смайли">
                        <svg viewBox="740 332 180 180"><g fill="none" stroke="#515054" stroke-width="9" stroke-linecap="round"><circle cx="830" cy="422" r="69"/><path d="M798 437c12 34 54 34 64 0"/></g><circle cx="804" cy="410" r="9" fill="#515054"/><circle cx="856" cy="410" r="9" fill="#515054"/></svg>
                    </button>
                    <button class="icon-button" aria-label="Тварини">
                        <svg viewBox="1056 332 180 180"><g fill="none" stroke="#515054" stroke-width="8" stroke-linecap="round"><path d="M1098 430v30l-29-48c4-36 38-64 77-64s75 28 79 64l-30 48v-30M1098 460c8 24 16 38 36 38h26c20 0 28-14 35-38M1146 444v14M1127 459c2 14 18 14 19 0 2 14 18 14 20 0"/></g><g fill="#515054"><circle cx="1123" cy="408" r="7"/><circle cx="1170" cy="408" r="7"/><path d="M1134 437h24q0 12-12 12t-12-12z"/></g></svg>
                    </button>
                    <button class="icon-button" aria-label="Їжа" aria-pressed="true">
                        <svg viewBox="-28 332 180 180"><g fill="none" stroke="#5fb8e4" stroke-width="9" stroke-linecap="round" stroke-linejoin="round"><path d="M-12 415c-4-38 24-56 58-56h32c34 0 62 18 58 56zM-14 435h66M102 435h37M-12 454h148c0 22-16 34-50 34H42c-36 0-54-12-54-34zM52 420l28 28 30-28"/></g><g fill="#5fb8e4"><circle cx="35" cy="383" r="5"/><circle cx="22" cy="397" r="5"/><circle cx="47" cy="397" r="5"/></g></svg>
                    </button>
                    <button class="icon-button" aria-label="Спорт">
                        <svg viewBox="289 332 180 180"><g fill="none" stroke="#515054" stroke-width="8"><circle cx="379" cy="422" r="76"/><path d="M379 346v152M303 423h152M324 372c32 34 32 68 0 102M434 372c-32 34-32 68 0 102"/></g></svg>
                    </button>
                    <button class="icon-button" aria-label="Місця">
                        <svg viewBox="605 332 180 180"><g fill="none" stroke="#515054" stroke-width="9" stroke-linejoin="round"><path d="M633 486v-82l62-44 63 44v82zM674 486v-59h41v59"/></g></svg>
                    </button>
                    <button class="icon-button" aria-label="Символи">
                        <svg viewBox="921 332 180 180"><g fill="none" stroke="#515054" stroke-width="9" stroke-linejoin="round"><rect x="958" y="361" width="112" height="123"/><path d="M980 361v123M998 383h60v24h-60z"/></g></svg>
                    </button>
                </div>
                <button class="icon-button backspace" aria-label="Стерти">
                    <svg viewBox="1137 332 180 180"><g fill="none" stroke="#515054" stroke-width="8" stroke-linejoin="round"><path d="M1188 376h118v94h-118l-42-47zM1218 400l46 46M1264 400l-46 46"/></g></svg>
                </button>
            </div>
        </section>

        <nav class="nav-bar">
            <button class="icon-button" aria-label="Останні">
                <svg viewBox="536 680 180 180"><path d="M567 755h96q17 0 17-17v-36M686 786h-96q-17 0-17 17v36" fill="none" stroke="#7a797c" stroke-width="11"/></svg>
            </button>
            <button class="icon-button" aria-label="Додому">
                <svg viewBox="-82 680 180 180"><path d="M71 713H-34q-15 0-15 15v106M64 738v76q0 14-14 14H-24" fill="none" stroke="#7a797c" stroke-width="11"/></svg>
            </button>
            <button class="icon-button" aria-label="Сховати">
                <svg viewBox="705 680 180 180"><path d="M732 771l50 48q13 12 13-4V711M859 771l-42 41" fill="none" stroke="#7a797c" stroke-width="11"/></svg>
            </button>
        </nav>
    </div>
</body>
</html>
```

FILE: styles.css
```css
* {
    box-sizing: border-box;
}

body {
    margin: 0;
    background-color: #fefeff;
    color: #1f1d22;
    font-family: "Noto Sans", "Open Sans", sans-serif;
}

button {
    border: none;
    padding: 0;
    background: none;
    color: inherit;
    font-family: inherit;
    cursor: pointer;
}

h1,
p {
    margin: 0;
    font-weight: normal;
}

.defs {
    position: absolute;
}

.screen {
    display: flex;
    flex-direction: column;
    min-height: 100vh;
}

.icon-button {
    display: flex;
    align-items: center;
    justify-content: center;
}

.icon-button svg {
    display: block;
    flex: none;
    width: 60px;
    height: 60px;
}

/* status bar */
.status-bar {
    display: flex;
    align-items: center;
    justify-content: space-between;
    height: 62px;
    padding: 0 57px 0 55px;
    background-color: #ff8f00;
    color: #ffe0b2;
    font-size: 33px;
    line-height: 40px;
}

.status-picture {
    width: 31px;
    height: 30px;
}

.status-right {
    display: flex;
    align-items: center;
    gap: 13px;
}

.status-signal {
    width: 118px;
    height: 36px;
}

.status-battery {
    width: 21px;
    height: 32px;
}

/* app bar */
.app-bar {
    position: relative;
    display: flex;
    align-items: center;
    padding: 13px 50px 11px 53px;
    background-color: #ff9a0d;
    color: #fff;
    box-shadow: 0 2px 10px rgba(60, 40, 60, 0.4);
}

.app-bar .back svg {
    width: 44px;
    height: 44px;
}

.app-title {
    flex: 1;
    min-width: 0;
    margin-left: 91px;
}

.app-title h1 {
    font-size: 43px;
    line-height: 66px;
}

.app-title p {
    font-size: 35px;
    line-height: 56px;
}

.publish {
    font-size: 34px;
}

.app-bar .more {
    margin-left: 72px;
}

.app-bar .more svg {
    width: 12px;
    height: 44px;
}

/* story editor */
.editor {
    flex: 1;
    display: flex;
    flex-direction: column;
    padding: 0 31px;
}

.cover-edge {
    height: 2px;
    background: repeating-linear-gradient(90deg, #8b898e 0 11px, transparent 11px 21px);
}

.chapter-title {
    width: 100%;
    margin-top: 81px;
    padding: 0 0 2px;
    border: none;
    border-bottom: 3px solid #77767a;
    outline: none;
    background: none;
    color: inherit;
    font-family: "Noto Serif", "Droid Serif", "DejaVu Serif", serif;
    font-size: 54px;
    line-height: 75px;
    text-align: center;
}

.story {
    margin-top: 56px;
    padding: 0 11px;
    outline: none;
    font-family: "Noto Serif", "Droid Serif", "DejaVu Serif", serif;
    font-size: 47px;
    line-height: 55px;
    white-space: nowrap;
}

.hug {
    width: 53px;
    height: 53px;
    vertical-align: -11px;
    margin: -5px 0;
}

.selected {
    display: inline-block;
    background-color: #c2c0c3;
    color: #343236;
}

.word-count {
    margin-top: auto;
    padding: 0 11px 12px;
    color: #969599;
    font-size: 31px;
    line-height: 42px;
    text-align: right;
}

/* format toolbar */
.format-bar {
    display: grid;
    grid-template-columns: repeat(5, 1fr);
    padding: 20px 23px 19px;
    border: 3px solid #ddd6d0;
    border-top-width: 2px;
    background-color: #fcf8f5;
}

.format-bar svg {
    width: 63px;
}

/* emoji keyboard */
.keyboard-tools {
    display: grid;
    grid-template-columns: repeat(5, 3fr) 1fr;
    padding: 22px 20px 24px 0;
    border-bottom: 1px solid #c4c3c9;
    background-color: #dedde3;
}

.emoji-panel {
    padding: 34px 28px 32px;
    border: 2px solid #cbcad0;
    border-top-width: 1px;
    border-bottom-width: 2px;
    background-color: #fbf9fd;
}

.emoji-grid {
    display: grid;
    grid-template-columns: repeat(7, 1fr);
    row-gap: 15px;
    justify-items: center;
}

.emoji-grid svg {
    display: block;
    width: 90px;
    height: 90px;
}

.pager {
    display: flex;
    justify-content: center;
    gap: 31px;
    margin-top: 45px;
}

.dot {
    width: 21px;
    height: 21px;
    border-radius: 50%;
    background-color: #d9d8db;
}

.dot.active {
    background-color: #4db5ea;
}

.category-bar {
    display: flex;
    align-items: center;
    padding: 22px 0 23px;
    border: 2px solid #cbcad0;
    border-top: none;
    border-bottom-width: 1px;
    background-color: #fbf9fd;
}

.to-keyboard {
    flex: none;
    width: 114px;
}

.categories {
    display: flex;
    flex: 1;
    min-width: 0;
    overflow: hidden;
    border-left: 2px solid #c9c8cd;
    border-right: 2px solid #c9c8cd;
}

.categories .icon-button {
    flex: none;
    width: 105px;
    padding-left: 4px;
}

.backspace {
    flex: none;
    width: 115px;
}

/* system navigation */
.nav-bar {
    display: grid;
    grid-template-columns: repeat(3, 1fr);
    padding: 32px 71px 33px 78px;
    background-color: #f1eff2;
}
```
